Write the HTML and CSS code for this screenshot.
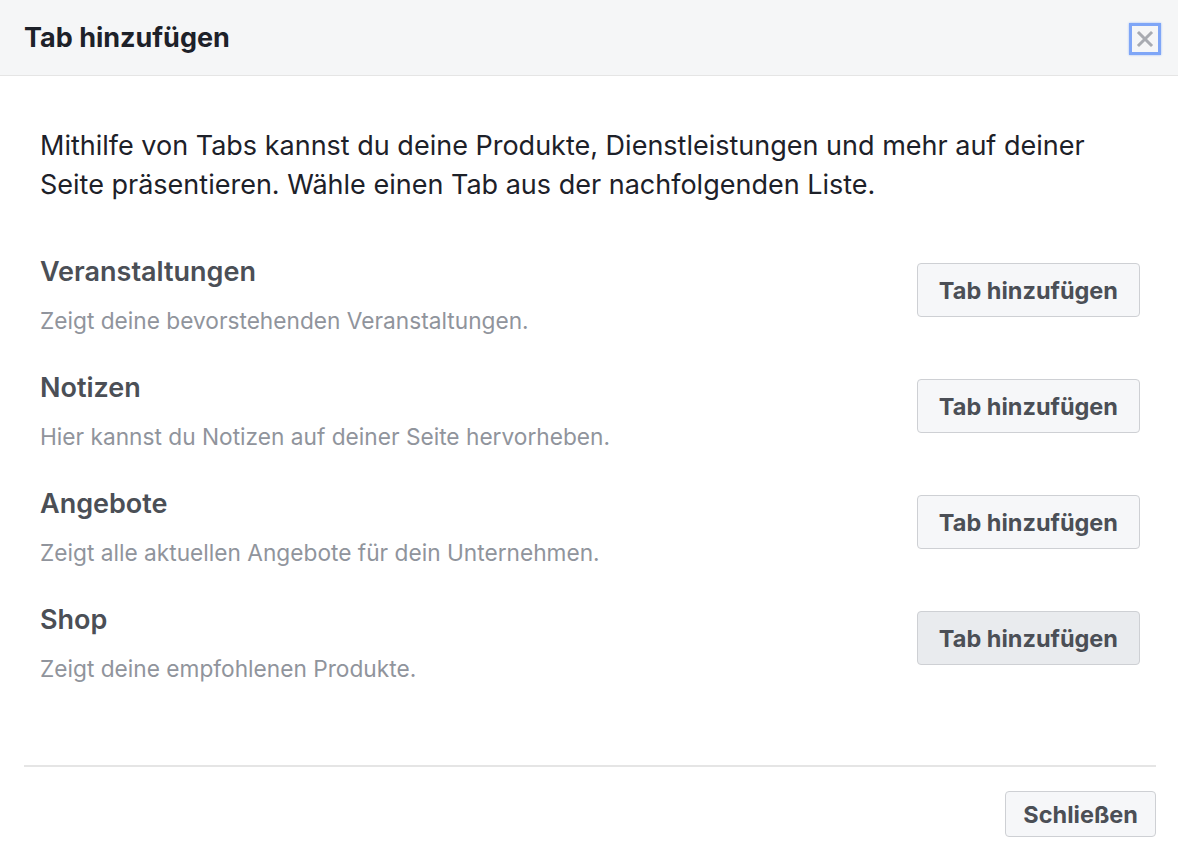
FILE: index.html
```html
<!DOCTYPE html>
<html lang="de">
<head>
<meta charset="UTF-8">
<meta name="viewport" content="width=device-width, initial-scale=1.0">
<title>Tab hinzufügen</title>
<link rel="stylesheet" href="styles.css">
</head>
<body>

<div class="dialog">
  <div class="dialog-header">
    <h2>Tab hinzufügen</h2>
    <button class="close-btn" title="Schließen">
      <svg width="22" height="22" viewBox="0 0 22 22">
        <path d="M5 5 L17 17 M17 5 L5 17" stroke="#a8abb1" stroke-width="3" stroke-linecap="square"/>
      </svg>
    </button>
  </div>

  <div class="dialog-body">
    <p class="intro">Mithilfe von Tabs kannst du deine Produkte, Dienstleistungen und mehr auf deiner Seite präsentieren. Wähle einen Tab aus der nachfolgenden Liste.</p>

    <div class="tab-list">
      <div class="tab-row">
        <div class="tab-info">
          <h3>Veranstaltungen</h3>
          <p>Zeigt deine bevorstehenden Veranstaltungen.</p>
        </div>
        <button class="btn">Tab hinzufügen</button>
      </div>
      <div class="tab-row">
        <div class="tab-info">
          <h3>Notizen</h3>
          <p>Hier kannst du Notizen auf deiner Seite hervorheben.</p>
        </div>
        <button class="btn">Tab hinzufügen</button>
      </div>
      <div class="tab-row">
        <div class="tab-info">
          <h3>Angebote</h3>
          <p>Zeigt alle aktuellen Angebote für dein Unternehmen.</p>
        </div>
        <button class="btn">Tab hinzufügen</button>
      </div>
      <div class="tab-row">
        <div class="tab-info">
          <h3>Shop</h3>
          <p>Zeigt deine empfohlenen Produkte.</p>
        </div>
        <button class="btn btn-hover">Tab hinzufügen</button>
      </div>
    </div>
  </div>

  <div class="dialog-footer">
    <button class="btn btn-small">Schließen</button>
  </div>
</div>

</body>
</html>
```

FILE: styles.css
```css
body {
  font-family: Inter, Roboto, "Liberation Sans", Arial, sans-serif;
  margin: 0;
  padding: 0;
  background-color: #fff;
  color: #1d2129;
}

.dialog {
  width: 1178px;
  height: 860px;
  background-color: #fff;
}

.dialog-header {
  display: flex;
  align-items: center;
  justify-content: space-between;
  height: 75px;
  padding: 0 17px 0 24px;
  background-color: #f5f6f7;
  border-bottom: 1px solid #e5e5e5;
}

.dialog-header h2 {
  margin: 0;
  font-size: 27px;
  font-weight: bold;
  color: #1d2129;
}

.close-btn {
  display: flex;
  align-items: center;
  justify-content: center;
  width: 32px;
  height: 32px;
  padding: 0;
  margin-top: 2px;
  background: transparent;
  border: 3px solid #7fa6f7;
  box-shadow: 0 0 2px #9dbaf8;
  cursor: pointer;
}

.dialog-body {
  padding: 0 38px 0 40px;
}

.intro {
  margin: 0;
  padding-top: 50px;
  font-size: 27px;
  line-height: 39px;
  color: #1d2129;
}

.tab-list {
  margin-top: 52px;
}

.tab-row {
  display: flex;
  align-items: flex-start;
  justify-content: space-between;
  height: 116px;
}

.tab-info h3 {
  margin: 0 0 19px;
  font-size: 27px;
  line-height: 32px;
  font-weight: 600;
  color: #4b4f56;
}

.tab-info p {
  margin: 0;
  font-size: 22.7px;
  line-height: 28px;
  color: #90949c;
}

.btn {
  height: 54px;
  padding: 0 21px;
  font-family: inherit;
  font-size: 23.5px;
  font-weight: bold;
  color: #4b4f56;
  background-color: #f6f7f9;
  border: 1px solid #ced0d4;
  border-radius: 4px;
  cursor: pointer;
}

.tab-row .btn {
  margin-top: 7px;
}

.btn-hover {
  background-color: #e9ebee;
}

.dialog-footer {
  display: flex;
  justify-content: flex-end;
  margin: 45px 22px 0 24px;
  padding-top: 24px;
  border-top: 2px solid #e5e5e5;
}

.btn-small {
  height: 46px;
  padding: 0 17px;
}
```
